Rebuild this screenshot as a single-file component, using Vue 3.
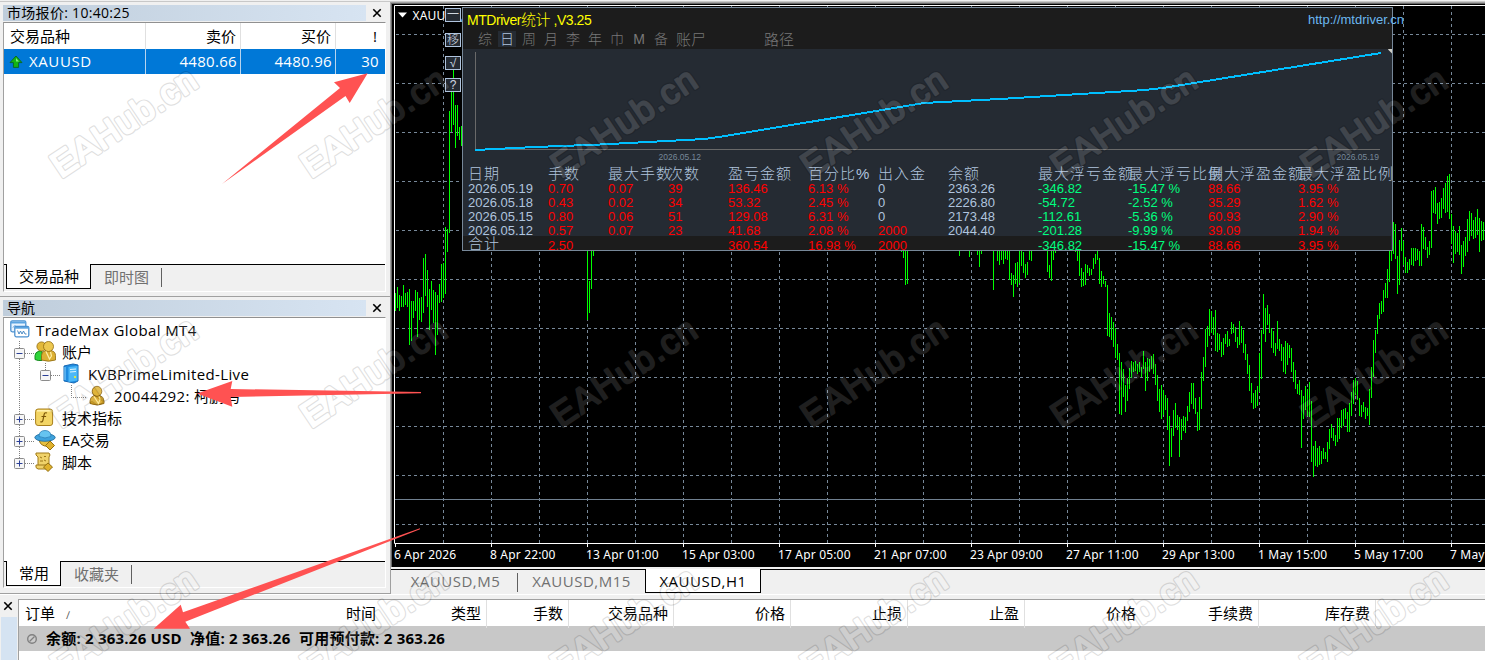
<template>
    <div class="app-window">
        <div class="toolbar-edge"></div>
        <div class="workspace">
            <aside class="sidebar">
                <section class="pane market-pane">
                    <header class="pane-title">
                        <span class="pane-caption caption-market">市场报价: 10:40:25</span>
                        <svg class="close-icon" width="10" height="10" viewBox="0 0 10 10">
                            <path d="M1.3 1.3L8.7 8.7M8.7 1.3L1.3 8.7" />
                        </svg>
                    </header>
                    <div class="pane-body">
                        <div class="quote-row quote-head">
                            <span>交易品种</span>
                            <span>卖价</span>
                            <span>买价</span>
                            <span>!</span>
                        </div>
                        <div class="quote-row quote-selected">
                            <span class="quote-symbol">
                                <svg width="14" height="14" viewBox="0 0 14 14">
                                    <path d="M7 1L13 7.6H9.6V12.4H4.4V7.6H1Z" fill="#14b414" stroke="#0a6a2a" />
                                    <path d="M7 3L10 6.6H7Z" fill="#7df07d" />
                                </svg>
                                XAUUSD
                            </span>
                            <span>4480.66</span>
                            <span>4480.96</span>
                            <span>30</span>
                        </div>
                        <div class="pane-fill"></div>
                        <div class="pane-tabs">
                            <button class="tab tab-active tab-symbols">交易品种</button>
                            <button class="tab">即时图</button>
                            <i class="tab-divider"></i>
                        </div>
                    </div>
                </section>

                <section class="pane nav-pane">
                    <header class="pane-title">
                        <span class="pane-caption">导航</span>
                        <svg class="close-icon" width="10" height="10" viewBox="0 0 10 10">
                            <path d="M1.3 1.3L8.7 8.7M8.7 1.3L1.3 8.7" />
                        </svg>
                    </header>
                    <div class="pane-body">
                        <ul class="tree">
                            <li v-for="node in tree" :key="node.label" class="tree-row">
                                <svg class="tree-gutter" :width="node.indent" height="22">
                                    <path :d="node.lines" stroke="#808080" fill="none" stroke-dasharray="1 1" />
                                    <g v-if="node.box">
                                        <rect :x="node.box - 5" y="7.5" width="10" height="10" rx="1" fill="#f6f6f6" stroke="#8c8c8c" />
                                        <path :d="`M${node.box - 3} 12.5h6`" stroke="#2a3f96" />
                                        <path v-if="node.closed" :d="`M${node.box} 9.5v6`" stroke="#2a3f96" />
                                    </g>
                                </svg>
                                <svg class="tree-icon" :width="node.iconWidth" height="22" :viewBox="`0 0 ${node.iconWidth} 22`">
                                    <g v-if="node.icon === 'platform'">
                                        <rect x="0.8" y="1.8" width="15" height="11" rx="1.5" fill="#e8f4ff" stroke="#4a90d0" stroke-width="1.3" />
                                        <path d="M1 3.5h15" stroke="#5aa4e0" stroke-width="2" />
                                        <path d="M3 8.5l2-2 1 1.500" stroke="#4a90d0" fill="none" />
                                        <rect x="4.8" y="7.3" width="14" height="10.500" rx="1.5" fill="#fff" stroke="#4a90d0" stroke-width="1.3" />
                                        <path d="M5 8.800h14" stroke="#5aa4e0" stroke-width="1.800" />
                                        <path d="M7.500 11.500l1.500 3.500 1.500-3 1.500 3 1.500-3 1.500 3h1.500" stroke="#3a80c0" stroke-width="0.900" fill="none" />
                                    </g>
                                    <g v-else-if="node.icon === 'accounts'">
                                        <path d="M1 18.500v-4q0-3 4-4.500h3v9.500q-4 0.500-7-1z" fill="#2fd43a" stroke="#158a1e" />
                                        <ellipse cx="7.500" cy="5.500" rx="4.600" ry="4.600" fill="#e3b93a" stroke="#8f6a10" stroke-width="0.800" />
                                        <path d="M7.500 19v-4.500q0-4 4-5h5.500q4.500 1 4.500 5v4.500q-7 2.500-14 0z" fill="#dcb034" stroke="#8f6a10" stroke-width="0.800" />
                                        <ellipse cx="14.500" cy="5.500" rx="5" ry="5" fill="#edc850" stroke="#8f6a10" stroke-width="0.800" />
                                        <path d="M12 10.500l3.500 7.500 2-3-1-4" stroke="#fff0a8" stroke-width="1.200" fill="none" />
                                    </g>
                                    <g v-else-if="node.icon === 'server'">
                                        <path d="M2 3l9-2 5 1v16l-4 2-10-2z" fill="#1f8ce0" stroke="#1668b4" />
                                        <path d="M6.500 4l9-1v14.500l-9 1.500z" fill="#4cb8f8" />
                                        <path d="M8 6.500l6-0.500M8 9l6-0.500" stroke="#e0f5ff" />
                                        <path d="M12 13h2v2h-2z" fill="#d8e84a" />
                                        <path d="M3 4v13" stroke="#8fd6ff" />
                                    </g>
                                    <g v-else-if="node.icon === 'user'">
                                        <path d="M1 18.500v-2.500q0-4 4-5.500h6q4 1.500 4 5.500v2.500q-7 3-14 0z" fill="#d6a628" stroke="#8a6210" stroke-width="0.900" />
                                        <ellipse cx="8" cy="6.300" rx="4.800" ry="5" fill="#dfb43a" stroke="#8a6210" stroke-width="0.900" />
                                        <path d="M5 11.500l4.500 7 1.500-4-1-3" stroke="#ffe98f" fill="none" stroke-width="1.200" />
                                    </g>
                                    <g v-else-if="node.icon === 'indicator'">
                                        <rect x="1.6" y="2" width="17" height="16.5" rx="2.5" fill="#f3d565" stroke="#a87f1c" />
                                        <path d="M3 3.800h14" stroke="#fff2ae" stroke-width="1.5" />
                                        <path d="M13 6q-2.6-1-3 2l-1 5q-.4 2.6-2.6 1.6M7.5 9.5h4.6" stroke="#7a5406" fill="none" stroke-width="1.2" />
                                    </g>
                                    <g v-else-if="node.icon === 'expert'">
                                        <path d="M5 11q2 7 9 6l3-6z" fill="#e6bf3e" stroke="#94700f" />
                                        <ellipse cx="11" cy="8.500" rx="10.200" ry="3.800" fill="#3ea2dc" stroke="#20699c" stroke-width="0.800" />
                                        <path d="M5 7.500q0-6 6-6t6 6q-6 3-12 0z" fill="#66c4f0" stroke="#2a7fb8" stroke-width="0.800" />
                                        <path d="M16 12l4.5 4.5-4.5 4.5-4.5-4.5z" fill="#e0b12c" stroke="#94700f" />
                                    </g>
                                    <g v-else>
                                        <path d="M2 2h13q2 2 0 4v8q2 1 1 4H4q-3-1-2-4h2V6Q1 4 2 2z" fill="#f0d26a" stroke="#a07a1a" />
                                        <path d="M6 6l2 1M10 5.5h2M6 10h3M10 9l2 1M4 14h9" stroke="#9c7618" />
                                        <path d="M14 12l4.5 4-4.5 4.5-4.5-4.5z" fill="#e0b12c" stroke="#94700f" />
                                    </g>
                                </svg>
                                <span :class="['tree-label', node.kind]">{{ node.label }}</span>
                            </li>
                        </ul>
                        <div class="pane-fill"></div>
                        <div class="pane-tabs nav-tabs">
                            <button class="tab tab-active tab-common">常用</button>
                            <button class="tab">收藏夹</button>
                            <i class="tab-divider"></i>
                        </div>
                    </div>
                </section>
            </aside>

            <main class="chart-area">
                <div class="chart">
                    <svg class="chart-canvas" width="1094" height="565" viewBox="391 2 1094 565">
                        <rect x="391" y="2" width="1094" height="565" fill="#000" />
                        <path d="M391 2.5H1485" stroke="#a0a0a0" />
                        <path d="M391 3.5H1485M391.5 3V567" stroke="#696969" />
                        <g stroke="#778899" stroke-dasharray="3 3" shape-rendering="crispEdges">
                            <path v-for="x in gridX" :key="x" :d="`M${x + 0.5} 6V543`" />
                            <path v-for="y in gridY" :key="y" :d="`M396 ${y + 0.5}H1485`" />
                        </g>
                        <path d="M395 499.5H1485" stroke="#708090" />
                        <path :d="barPath" stroke="#00ff00" shape-rendering="crispEdges" />
                        <path d="M1485 5.5H394.5V543.5H1485" stroke="#fff" fill="none" />
                        <g v-for="(label, i) in timeLabels" :key="label">
                            <path :d="`M${395.5 + i * 96} 544v3`" stroke="#fff" />
                            <text :x="394 + i * 96" y="559" class="axis-text">{{ label }}</text>
                        </g>
                        <path d="M398 12.5h9l-4.5 5z" fill="#fff" />
                        <text x="412.500" y="20" class="axis-text">XAUUSD,H1</text>
                    </svg>

                    <div class="panel-buttons">
                        <span class="mini-btn btn-min">一</span>
                        <span class="mini-btn btn-move">移</span>
                        <span class="mini-btn btn-check">√</span>
                        <span class="mini-btn btn-help">?</span>
                    </div>

                    <div class="stats-panel">
                        <div class="stats-top">
                            <div class="stats-heading">
                                <span class="stats-title">MTDriver<b>统计</b> ,V3.25</span>
                                <span class="stats-link">http://mtdriver.cn</span>
                            </div>
                            <div class="stats-menu">
                                <span v-for="item in menu" :key="item" :class="{ current: item === '日' }">{{ item }}</span>
                                <span class="menu-account">账尸</span>
                                <span class="menu-path">路径</span>
                            </div>
                        </div>
                        <svg class="equity" width="929" height="114" viewBox="463 49 929 114">
                            <path d="M475.5 52V149.5H1380" stroke="#696969" fill="none" />
                            <path d="M475 150L535 147L600 144.500L705 139L725 136L924 103L1000 99L1145 90L1163 88L1381 53"
                                stroke="#00bfff" stroke-width="2" fill="none" shape-rendering="crispEdges" />
                            <path d="M1388 49.500l4-4v8z" fill="#d0d0c8" />
                            <text x="658.500" y="160">2026.05.12</text>
                            <text x="1336.500" y="160">2026.05.19</text>
                        </svg>
                        <div class="stats-row stats-head">
                            <span v-for="(name, i) in columns" :key="i">{{ name }}</span>
                        </div>
                        <div v-for="(row, r) in rows" :key="r" class="stats-row" :class="{ 'stats-total': r === 4 }">
                            <span v-for="(cell, c) in row" :key="c" :class="cellClass(cell, c)">{{ cell }}</span>
                        </div>
                    </div>
                </div>

                <nav class="chart-tabs">
                    <div class="chart-tab-row">
                        <button class="ctab ctab-m5">XAUUSD,M5</button>
                        <i class="tab-divider"></i>
                        <button class="ctab ctab-m15">XAUUSD,M15</button>
                        <button class="ctab ctab-active">XAUUSD,H1</button>
                    </div>
                </nav>
            </main>
        </div>

        <section class="terminal">
            <div class="terminal-side">
                <svg class="close-icon" width="10" height="10" viewBox="0 0 10 10">
                    <path d="M1.3 1.3L8.7 8.7M8.7 1.3L1.3 8.7" />
                </svg>
                <div class="terminal-strip"></div>
            </div>
            <div class="terminal-body">
                <div class="order-head">
                    <span class="order-first">订单 <i>∕</i></span>
                    <span v-for="(name, i) in orderColumns" :key="i" :class="{ ruled: ![0, 7, 10].includes(i) }">{{ name }}</span>
                </div>
                <div class="balance-row">
                    <svg width="12" height="12" viewBox="0 0 12 12">
                        <circle cx="6" cy="6" r="4.300" fill="#ccc" stroke="#808080" stroke-width="1.400" />
                        <path d="M3.500 8.500l5-5" stroke="#808080" stroke-width="1.300" />
                    </svg>
                    <span class="bal-a">余额: 2 363.26 USD</span>
                    <span class="bal-b">净值: 2 363.26</span>
                    <span class="bal-c">可用预付款: 2 363.26</span>
                </div>
            </div>
        </section>

        <svg class="overlay" width="1485" height="660" viewBox="0 0 1485 660">
            <g v-for="mark in marks" :key="mark.id" class="watermark" :transform="`translate(${mark.x} ${mark.y}) rotate(-33.8)`">
                <text class="mark-edge" textLength="167">EAHub.cn</text>
                <text class="mark-face" textLength="167">EAHub.cn</text>
            </g>
            <g fill="#ff5252">
                <path d="M367.700 73.300L334 82.300L340 88L222 184L345.500 96L349.700 103Z" />
                <path d="M197 393.500L232.300 381L230.700 389L421 392V393.300L230.700 397L232.300 406.700Z" />
                <path d="M153.700 628.700L180.700 604.700L183 612.300L420 528.300V529.300L185.300 621.700L190 628.700Z" />
            </g>
        </svg>
    </div>
</template>

<script setup>
import { computed } from 'vue'

// Navigator tree
const tree = [
    { label: 'TradeMax Global MT4', icon: 'platform', iconWidth: 20, indent: 6, lines: '', kind: 'latin-root' },
    { label: '账户', icon: 'accounts', iconWidth: 22, indent: 30, lines: 'M15.5 0v22M21 12.500h9', box: 15.5 },
    { label: 'KVBPrimeLimited-Live', icon: 'server', iconWidth: 18, indent: 58, lines: 'M15.5 0v22M41.5 0v12M47 12.500h9', box: 41.5, kind: 'latin-server' },
    { label: '20044292: 柯鹏鸟', icon: 'user', iconWidth: 17, indent: 85, lines: 'M15.5 0v22M67.5 0v12.500h15', kind: 'latin-user' },
    { label: '技术指标', icon: 'indicator', iconWidth: 22, indent: 30, lines: 'M15.5 0v22M21 12.500h9', box: 15.5, closed: true },
    { label: 'EA交易', icon: 'expert', iconWidth: 22, indent: 30, lines: 'M15.5 0v22M21 12.500h9', box: 15.5, closed: true },
    { label: '脚本', icon: 'script', iconWidth: 22, indent: 30, lines: 'M15.5 0v12M21 12.500h9', box: 15.5, closed: true },
]

// Chart grid and time scale
const gridX = Array.from({ length: 22 }, (_, i) => 443 + i * 48)
const gridY = Array.from({ length: 11 }, (_, i) => 34 + i * 49)
const timeLabels = [
    '6 Apr 2026', '8 Apr 22:00', '13 Apr 01:00', '15 Apr 03:00', '17 Apr 05:00', '21 Apr 07:00',
    '23 Apr 09:00', '27 Apr 11:00', '29 Apr 13:00', '1 May 15:00', '5 May 17:00', '7 May 19:00',
]

// Price bars: each run starts at x and steps 2px, values are high,low pairs
const barRuns = [
    { x: 395, v: [293,311,287,308,295,311,296,307,285,307,293,305,292,307,289,345,301,341,301,318,290,311,292,337,298,320,297,322,258,313,254,296,270,307,289,330,281,310,290,323,292,355,295,335,284,303,264,302,263,298,227,294,229,252,111,233,85,132,65,125,105,148,105,136,127,140,126,146] },
    { x: 587, v: [250,320,281,313,250,289,250,256] },
    { x: 901, v: [250,252,250,258,250,285,250,284] },
    { x: 959, v: [250,256] },
    { x: 969, v: [250,257] },
    { x: 977, v: [250,255,250,267,250,254] },
    { x: 993, v: [250,290] },
    { x: 997, v: [250,261,250,265,250,260,250,264,250,259,250,260,250,280,273,285,275,297,263,284,262,287,250,283,250,266,252,273,264,278,262,275,250,260,250,261] },
    { x: 1047, v: [250,272,265,278,250,281,250,260,250,253] },
    { x: 1075, v: [250,252,250,261,251,276,268,287,272,286,264,285,265,273,268,276,269,275,258,269,254,264,250,260,258,284,271,287,276,284,281,287,285,336,313,337,317,340,322,347,328,358,344,360,353,414,362,415,369,397,385,412,378,401,368,389,361,378,362,372,361,371,364,374,362,372,367,377,351,369,362,391,358,381,359,372,356,369,354,374,364,385,375,401,389,412,385,419,390,415,395,410,398,430,416,466,428,457,410,436,403,428,415,430,417,457,419,440,416,431,417,433,406,421,392,412,383,404,383,409,398,414,412,431,397,430,372,409,357,381,329,367,326,347,309,336,311,333,317,335,310,351,333,352,334,350,342,357,338,355,334,344,331,347,339,346,322,334,324,333,327,342,337,348,321,345,326,343,330,353,344,360,354,374,365,391,383,403,393,409,390,408,386,406,353,392,330,379,294,334,308,342,305,325,314,333,328,348,331,353,343,356,321,349,339,351,344,361,347,372,341,374,343,365,345,358,348,372,362,382,370,389,384,394,380,395,390,448,396,419,386,410,389,416,382,417,401,462,446,477,441,466,448,467,446,465,451,464,448,459,452,459,442,462,429,449,424,438,428,441,435,446,418,442,418,439,410,428,409,426,408,419,412,432,403,432,392,416,380,404,378,395,381,400,398,416,405,417,402,412,407,419,408,416,389,425,367,398,340,377,330,353,315,334,303,319,301,314,290,312,283,298,269,298,250,282,243,261,222,254,224,259,256,294,240,285,228,251,241,265,257,273,262,273,259,270,248,265,248,266,248,261,249,260,251,266,224,266,227,249,237,250,247,258,241,255,191,248,190,213,187,214,203,224,202,219,198,218,188,209,183,213,176,212,174,219,214,244,226,263,231,254,233,252,226,255,245,274,241,267,237,256,219,252,211,241,213,236,220,239,217,238,209,235,218,252,221,241,222,240] },
]

const barPath = computed(() => {
    let d = ''
    for (const run of barRuns) {
        for (let i = 0; i < run.v.length; i += 2) {
            d += `M${run.x + i + 0.5} ${run.v[i]}V${run.v[i + 1]}`
        }
    }
    return d
})

// Statistics panel
const menu = ['综', '日', '周', '月', '李', '年', '巾', 'M', '备']
const columns = ['日期', '手数', '最大手数', '次数', '盈亏金额', '百分比%', '出入金', '余额', '最大浮亏金额', '最大浮亏比例', '最大浮盈金额', '最大浮盈比例']
const rows = [
    ['2026.05.19', '0.70', '0.07', '39', '136.46', '6.13 %', '0', '2363.26', '-346.82', '-15.47 %', '88.66', '3.95 %'],
    ['2026.05.18', '0.43', '0.02', '34', '53.32', '2.45 %', '0', '2226.80', '-54.72', '-2.52 %', '35.29', '1.62 %'],
    ['2026.05.15', '0.80', '0.06', '51', '129.08', '6.31 %', '0', '2173.48', '-112.61', '-5.36 %', '60.93', '2.90 %'],
    ['2026.05.12', '0.57', '0.07', '23', '41.68', '2.08 %', '2000', '2044.40', '-201.28', '-9.99 %', '39.09', '1.94 %'],
    ['合计', '2.50', '', '', '360.54', '16.98 %', '2000', '', '-346.82', '-15.47 %', '88.66', '3.95 %'],
]

const cellClass = (cell, col) => {
    if (col === 0 || col === 7 || cell === '0') return 'plain'
    return cell.startsWith('-') ? 'loss' : 'gain'
}

const orderColumns = ['时间', '类型', '手数', '交易品种', '价格', '止损', '止盈', '价格', '手续费', '库存费', '']

const marks = []
for (let row = 0; row < 3; row++) {
    for (let col = 0; col < 6; col++) {
        marks.push({ id: `${row}-${col}`, x: 61 + col * 250, y: 178.5 + row * 250 })
    }
}
</script>

<style>
body {
    background: #f0f0f0;
    overflow: hidden;
}
</style>

<style scoped>
.app-window {
    position: relative;
    display: flex;
    flex-direction: column;
    width: 1485px;
    height: 660px;
    overflow: hidden;
    background: #f0f0f0;
    color: #000;
    font-family: "Open Sans", "Noto Sans CJK SC", sans-serif;
    font-size: 15px;
}

button {
    padding: 0;
    border: 0;
    background: none;
    font: inherit;
    color: inherit;
    letter-spacing: inherit;
    white-space: nowrap;
}

.toolbar-edge {
    flex: none;
    box-sizing: border-box;
    height: 2px;
    border-bottom: 1px solid #c8c8c8;
}

.workspace {
    display: flex;
    flex: none;
    height: 592px;
}

.sidebar {
    width: 390px;
}

.pane {
    display: flex;
    flex-direction: column;
    box-sizing: border-box;
    padding: 3px 4px 0 3px;
    border-bottom: 1px solid #a0a0a0;
}

.market-pane {
    height: 295px;
}

.nav-pane {
    height: 297px;
}

.pane-title {
    display: flex;
    align-items: center;
    height: 16px;
    margin-bottom: 1px;
}

.pane-caption {
    width: 359px;
    height: 16px;
    padding-left: 4px;
    background: linear-gradient(90deg, #bfcddb, #d7e4f2);
    font-size: 14px;
    line-height: 16px;
}

.caption-market {
    letter-spacing: 0.3px;
}

.close-icon {
    margin: 0 0 1px 6px;
    fill: none;
    stroke: #000;
    stroke-width: 1.6;
}

.pane-body {
    display: flex;
    flex-direction: column;
    box-sizing: border-box;
    height: 270px;
    border: 1px solid #fff;
    border-top-color: #909090;
    border-left-color: #a0a0a0;
    background: #f0f0f0;
}

.nav-pane .pane-body {
    height: 271px;
}

.pane-fill {
    flex: 1;
    background: #fff;
}

.quote-row {
    display: grid;
    grid-template-columns: 142px 95px 95px 48px;
    height: 26px;
    line-height: 26px;
    background: #fff;
}

.quote-row > span {
    box-sizing: border-box;
    padding-right: 4px;
    border-right: 1px solid #e0e0e0;
    text-align: right;
}

.quote-row > span:first-child {
    padding-left: 6px;
    text-align: left;
}

.quote-selected {
    height: 25px;
    line-height: 25px;
    background: #0078d7;
    color: #fff;
    letter-spacing: 0.3px;
}

.quote-selected > span {
    padding-right: 3px;
    border-right-color: #b8d4ee;
}

.quote-row > span:last-child {
    padding-right: 4px;
    border-right-color: transparent;
}

.quote-head > span:last-child {
    padding-right: 6px;
}

.quote-row > .quote-symbol {
    display: flex;
    align-items: center;
    gap: 6px;
    padding-left: 4px;
    letter-spacing: 0.6px;
}

.quote-symbol svg {
    margin-left: -1px;
}

.pane-tabs {
    display: flex;
    height: 26px;
    border-top: 1px solid #000;
}

.nav-tabs {
    height: 25px;
}

.tab {
    height: 24px;
    padding: 0 12px 0 13px;
    line-height: 21px;
    color: #707070;
}

.tab-active {
    box-sizing: border-box;
    height: 25px;
    margin: -1px 0 0 2px;
    padding: 0 0 0 1px;
    border: 1px solid #000;
    border-width: 0 1px 1px;
    background: #fff;
    color: #000;
    line-height: 23px;
}

.tab-symbols {
    width: 85px;
}

.tab-common {
    width: 55px;
}

.tab-divider {
    width: 1px;
    height: 19px;
    margin-top: 3px;
    background: #606060;
}

.tree {
    margin: 0;
    padding: 1px 0 0;
    list-style: none;
    background: #fff;
}

.tree-row {
    display: flex;
    align-items: center;
    height: 22px;
    white-space: nowrap;
}

.tree-gutter,
.tree-icon {
    flex: none;
}

.tree-label {
    padding-left: 6px;
    line-height: 22px;
}

.latin-root {
    letter-spacing: 0.4px;
}

.latin-server {
    padding-left: 8px;
    letter-spacing: 0.38px;
}

.latin-user {
    padding-left: 8px;
    letter-spacing: 0.35px;
}

.chart-area {
    width: 1094px;
    border-left: 1px solid #a0a0a0;
}

.chart {
    position: relative;
    height: 565px;
}

.chart-canvas {
    display: block;
}

.axis-text {
    fill: #fff;
    font-family: "Noto Sans", sans-serif;
    font-size: 12px;
    letter-spacing: 0.17px;
}

.panel-buttons {
    position: absolute;
    top: 6px;
    left: 54px;
    display: flex;
    flex-direction: column;
    font-family: "Liberation Sans", "Noto Sans CJK SC", sans-serif;
}

.mini-btn {
    box-sizing: border-box;
    width: 16px;
    height: 14px;
    margin-bottom: 8px;
    overflow: hidden;
    border: 1px solid #b0c4de;
    background: #252b33;
    color: #d0d8e0;
    font-size: 12px;
    line-height: 12px;
    text-align: center;
}

.btn-min {
    margin-bottom: 11px;
}

.btn-move {
    margin-bottom: 9px;
    font-weight: 300;
}

.stats-panel {
    position: absolute;
    top: 5px;
    left: 71px;
    box-sizing: border-box;
    width: 931px;
    height: 244px;
    border: 1px solid #778899;
    background: #252b33;
    color: #b0c4de;
    font-family: "Liberation Sans", "Noto Sans CJK SC", sans-serif;
    font-size: 13px;
    white-space: nowrap;
}

.stats-top {
    height: 41px;
    background: #1c1c1c;
}

.stats-heading {
    display: flex;
    justify-content: space-between;
    height: 22px;
    padding-left: 4px;
    line-height: 23px;
}

.stats-title {
    color: #ffff00;
    font-size: 14px;
    letter-spacing: -0.45px;
}

.stats-title b {
    font-size: 15px;
    font-weight: 300;
}

.stats-link {
    width: 84px;
    color: #6bb8f0;
    font-size: 13px;
}

.stats-menu {
    display: flex;
    height: 18px;
    padding-left: 11px;
    color: #787878;
    font-size: 14px;
    font-weight: 300;
    line-height: 19px;
}

.stats-menu span {
    width: 22px;
    text-align: center;
}

.stats-menu .current {
    width: 18px;
    height: 16px;
    margin: 1px 2px 0;
    background: #252b33;
    color: #b0c4de;
    line-height: 17px;
}

.stats-menu .menu-account {
    width: 32px;
    margin-left: 4px;
    font-size: 15px;
    text-align: left;
}

.stats-menu .menu-path {
    margin-left: 56px;
    font-size: 15px;
    text-align: left;
}

.equity {
    display: block;
    height: 114px;
}

.equity text {
    fill: #778899;
    font-size: 8.5px;
}

.stats-row {
    display: grid;
    grid-template-columns: 80px 60px 60px 60px 80px 70px 70px 90px 90px 80px 90px 90px;
    height: 14px;
    padding-left: 5px;
    line-height: 15px;
}

.stats-head {
    height: 18px;
    font-size: 15px;
    font-weight: 300;
    letter-spacing: 1px;
    line-height: 21px;
}

.stats-total {
    overflow: hidden;
    margin: -1px 1px 0 0;
    background: #1c1c1c;
    line-height: 19px;
}

.stats-total .plain {
    font-size: 15px;
    font-weight: 300;
    letter-spacing: 1px;
    line-height: 16px;
}

.gain {
    color: #ff0000;
}

.loss {
    color: #00ff7f;
}

.chart-tabs {
    height: 25px;
    padding-top: 2px;
}

.chart-tab-row {
    display: flex;
    height: 24px;
    border-top: 1px solid #000;
    color: #707070;
    font-size: 15px;
    letter-spacing: 0.5px;
}

.ctab {
    height: 23px;
    line-height: 23px;
}

.ctab-m5 {
    width: 126px;
    padding-left: 3px;
}

.ctab-m15 {
    width: 127px;
}

.ctab-active {
    box-sizing: border-box;
    width: 116px;
    height: 24px;
    margin-top: -1px;
    border: 1px solid #000;
    border-width: 0 1px 1px;
    background: #fff;
    color: #000;
    line-height: 25px;
}

.terminal {
    box-sizing: border-box;
    display: flex;
    flex: none;
    height: 66px;
    padding-top: 4px;
    border-top: 1px solid #fff;
}

.terminal-side {
    display: flex;
    flex-direction: column;
    width: 18px;
}

.terminal-side .close-icon {
    flex: none;
    margin: 2px 0 0 3px;
}

.terminal-strip {
    flex: 1;
    width: 16px;
    margin: 6px 0 0 1px;
    background: #d5e3f2;
}

.terminal-body {
    flex: 1;
    border-top: 1px solid #a0a0a0;
    border-left: 1px solid #a0a0a0;
    background: #fff;
}

.order-head {
    display: grid;
    grid-template-columns: 130px 233px 105px 82px 105px 117px 117px 117px 117px 117px 117px 1fr;
    height: 26px;
    line-height: 26px;
    text-align: right;
}

.order-head > span {
    box-sizing: border-box;
    padding-right: 5px;
    border-right: 1px solid transparent;
}

.order-head > .ruled {
    border-right-color: #e0e0e0;
}

.order-head > .order-first {
    padding-left: 6px;
    text-align: left;
}

.order-first i {
    margin-left: 7px;
    color: #606060;
    font-size: 11px;
    font-style: normal;
}

.balance-row {
    display: flex;
    align-items: center;
    height: 25px;
    padding-left: 7px;
    background: #c8c8c8;
    font-weight: 700;
    line-height: 24px;
    letter-spacing: 0.22px;
    white-space: nowrap;
}

.balance-row span {
    height: 25px;
}

.bal-a {
    width: 144px;
    padding-left: 8px;
}

.bal-b {
    width: 109px;
}

.overlay {
    position: absolute;
    top: 0;
    left: 0;
    pointer-events: none;
}

.watermark {
    opacity: 0.12;
    font-family: "Liberation Sans", sans-serif;
    font-size: 35px;
    stroke-linejoin: round;
}

.mark-edge {
    fill: #000;
    stroke: #000;
    stroke-width: 4.4px;
}

.mark-face {
    fill: #fff;
    stroke: #fff;
    stroke-width: 2px;
}
</style>
